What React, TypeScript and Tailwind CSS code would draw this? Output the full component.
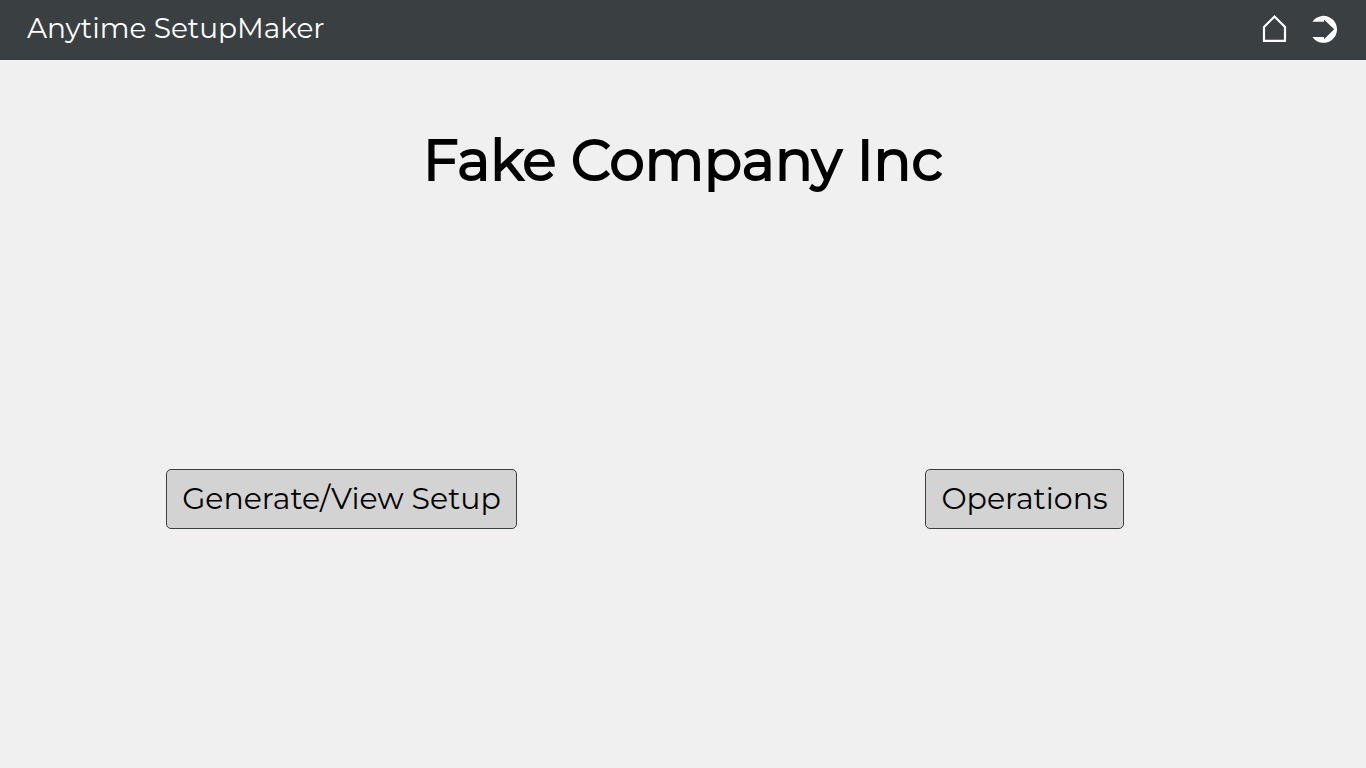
export default function App() {
  return (
    <div className="flex min-h-screen flex-col bg-[#f0f0f0] font-['Montserrat','Inter',sans-serif] text-black">
      <header className="flex h-15 items-center justify-between border-b border-[#3d3a40] bg-[#3a3f42] px-[27px] pb-[3px] text-white">
        <a href="#" className="text-[28px] leading-9">Anytime SetupMaker</a>
        <nav className="flex items-center gap-6">
          <a href="#" aria-label="Home">
            <svg width="26" height="30" viewBox="0 0 26 30" fill="none" stroke="currentColor" strokeWidth="2.2"><path d="M3 14 13.5 3.5 24 14V27.9H3Z" /></svg>
          </a>
          <a href="#" aria-label="Log out">
            <svg width="28" height="30" viewBox="0 0 28 30" fill="currentColor"><path d="M1.4 8.7A13.5 13.5 0 1 1 1.4 24H13v2.2L23.2 16.3 13 6.6V8.7Z" /></svg>
          </a>
        </nav>
      </header>
      <main className="flex flex-1 flex-col">
        <h1 className="pt-16 text-center text-[56px] leading-[72px] font-normal [-webkit-text-stroke:2px_black]">Fake Company Inc</h1>
        <div className="mt-[273px] grid grid-cols-2 justify-items-center">
          <button className="h-15 rounded-[5px] border border-[#3a3f42] bg-[#d3d3d3] px-[15px] pb-0.5 text-[30px]">Generate/View Setup</button>
          <button className="h-15 rounded-[5px] border border-[#3a3f42] bg-[#d3d3d3] px-[15px] pb-0.5 text-[30px]">Operations</button>
        </div>
      </main>
    </div>
  );
}
